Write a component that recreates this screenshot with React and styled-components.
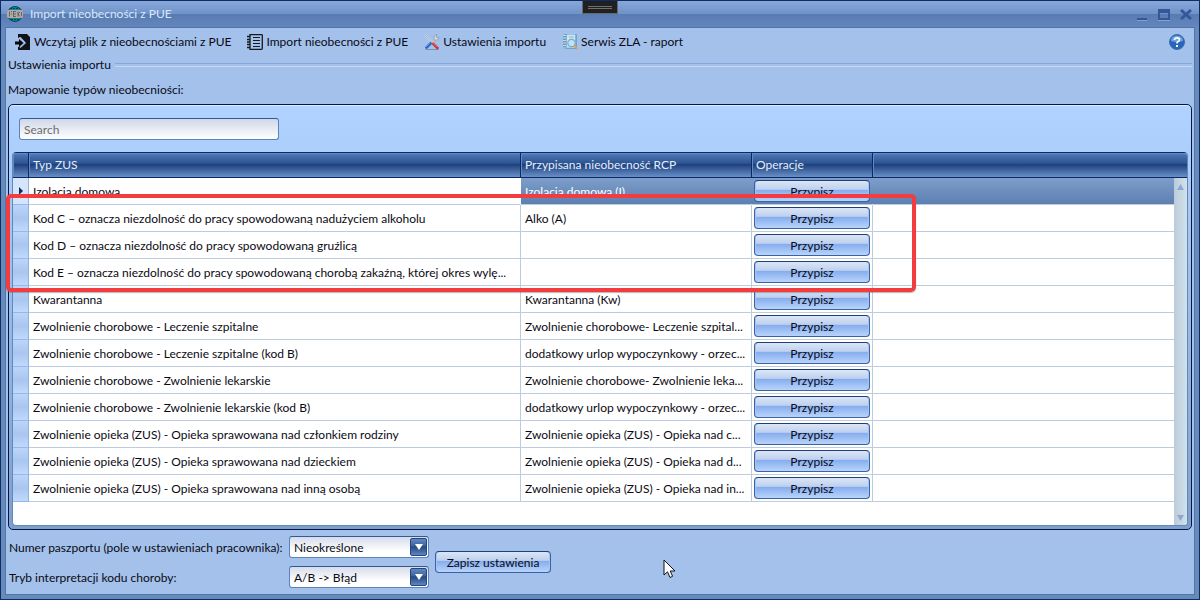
import React, { useState } from 'react';
import styled, { createGlobalStyle } from 'styled-components';

const GlobalStyle = createGlobalStyle`
	* {
		box-sizing: border-box;
	}
	body {
		margin: 0;
	}
	body, button, input, select {
		font-family: Lato, "Open Sans", sans-serif;
		font-size: 12px;
		line-height: 16px;
		color: #0a0a14;
	}
`;

const Window = styled.div`
	position: relative;
	display: flex;
	flex-direction: column;
	min-height: 100vh;
	padding: 0 4px 4px;
	border: 1px solid #0f2c66;
	background: #668aba;
	overflow: hidden;
`;

const TitleBar = styled.header`
	display: flex;
	align-items: center;
	height: 26px;
	margin: 0 -4px;
	padding: 0 5px 0 6px;
	background: linear-gradient(#88a8da, #6f92c8 50%, #587cb2 50%, #6387bc);
`;

const Title = styled.h1`
	flex: 1;
	margin: 0 0 0 7px;
	font-size: 12px;
	font-weight: 400;
	color: #d8e8fb;
`;

const WindowButton = styled.button`
	display: flex;
	padding: 0;
	margin-left: 6px;
	border: none;
	background: none;
	cursor: pointer;
`;

const Handle = styled.div`
	position: absolute;
	top: -1px;
	left: 581px;
	width: 36px;
	height: 14px;
	padding: 5px;
	border: 1px solid #686868;
	background: #202020;
`;

const HandleLines = styled.div`
	height: 3px;
	border: solid #707070;
	border-width: 1px 0;
`;

const Content = styled.main`
	flex: 1;
	display: flex;
	flex-direction: column;
	padding: 0 2px 6px;
	border: 1px solid #5075a8;
	background: #a3c1eb;
`;

const Toolbar = styled.nav`
	display: flex;
	align-items: center;
	gap: 16px;
	height: 28px;
	padding: 0 7px;
`;

const ToolButton = styled.button`
	display: flex;
	align-items: center;
	gap: 3px;
	padding: 0;
	border: none;
	background: none;
	white-space: nowrap;
	cursor: pointer;
`;

const HelpButton = styled(ToolButton)`
	margin-left: auto;
`;

const GroupTitle = styled.h2`
	display: flex;
	align-items: center;
	gap: 4px;
	margin: 0;
	height: 18px;
	font-size: 12px;
	font-weight: 400;

	&::after {
		content: "";
		flex: 1;
		height: 2px;
		border-top: 1px solid #84a7dc;
		border-bottom: 1px solid #c4d8f4;
	}
`;

const Caption = styled.p`
	margin: 0;
	padding: 8px 0 6px;
`;

const GridPanel = styled.section`
	flex: 1;
	display: flex;
	flex-direction: column;
	padding: 13px 3px 3px;
	border: 1px solid #04164a;
	border-radius: 5px;
	background: linear-gradient(#b1d3ff, #a8caf6 20%, #7f9fca);
	box-shadow: inset 0 1px #d9eaff;
`;

const SearchInput = styled.input`
	width: 260px;
	height: 22px;
	margin: 0 7px 12px;
	padding: 0 4px;
	border: 1px solid #5d82bd;
	border-top-color: #34588f;
	border-radius: 3px;
	background: linear-gradient(#cfd8e8, #fff);

	&::placeholder {
		color: #6d6d6d;
		opacity: 1;
	}
`;

const GridBody = styled.div`
	position: relative;
	flex: 1;
	border: 1px solid #5f87c0;
	border-top: none;
	border-radius: 4px;
	background: #fff;
	overflow: hidden;
`;

const Table = styled.table`
	width: 100%;
	table-layout: fixed;
	border-collapse: separate;
	border-spacing: 0;
`;

const HeadCell = styled.th`
	height: 26px;
	width: ${props => props.$width || 'auto'};
	padding: 0 4px;
	border: solid #0a2a63;
	border-width: 1px ${props => (props.$last ? '0' : '1px')} 1px 0;
	background: linear-gradient(#5b85c2, #4670ad 12%, #2c5391 44%, #1c3d79 46%, #6990c9);
	box-shadow: inset 1px 1px #6289c2;
	font-weight: 400;
	text-align: left;
	color: #e2effd;
`;

const Cell = styled.td`
	height: 27px;
	padding: 2px 4px 0;
	border-right: 1px solid #bccbe0;
	border-bottom: 1px solid #bccbe0;
	white-space: nowrap;
	overflow: hidden;
`;

const Row = styled.tr`
	${Cell} {
		${props => props.$selected && `
			border-right-color: transparent;
			background: linear-gradient(#7e9dca, #5d80b1);
			color: #fff;
		`}
	}
`;

const FocusedCell = styled(Cell)`
	&&& {
		background: #fff;
		color: #0a0a14;
	}
`;

const RowHeader = styled.th`
	height: 27px;
	padding: 0 0 0 5px;
	border-right: 1px solid #8db0e6;
	border-bottom: 1px solid #96b7e8;
	background: ${props => (props.$selected ? '#d6e5fa' : 'linear-gradient(#bcd5f9, #a9c6f0 50%, #c0d9fb)')};
	line-height: 8px;
	text-align: left;
`;

const ButtonCell = styled(Cell)`
	padding: 2px;
`;

const GlossButton = styled.button`
	display: block;
	width: 116px;
	height: 22px;
	padding: 1px 0 0;
	border: 1px solid #3b62a2;
	border-top-color: #203f78;
	border-radius: 4px;
	background: linear-gradient(#dbe6f6, #bed0ef 42%, #84acee 45%, #b9d4fb);
	box-shadow: inset 1px 0 #a5c5f5, inset -1px 0 #a5c5f5;
	cursor: pointer;
`;

const ScrollTrack = styled.div`
	position: absolute;
	top: 26px;
	right: 0;
	bottom: 0;
	display: flex;
	flex-direction: column;
	align-items: center;
	justify-content: space-between;
	width: 13px;
	padding: 6px 0 4px;
	background: linear-gradient(90deg, #bccbda, #d0e2ea);
`;

const Footer = styled.form`
	display: grid;
	grid-template-columns: minmax(281px, max-content) 140px max-content;
	align-items: center;
	justify-content: start;
	gap: 8px 0;
	margin-top: 6px;
`;

const FieldLabel = styled.label`
	padding: 1px 0 0 1px;
`;

const SelectBox = styled.div`
	display: flex;
	position: relative;
`;

const Select = styled.select`
	appearance: none;
	width: 100%;
	height: 22px;
	padding: 1px 20px 0 4px;
	border: 1px solid #5d82bd;
	border-top-color: #34588f;
	border-radius: 3px;
	background: linear-gradient(#d5dcea, #fff 70%);
`;

const SelectArrow = styled.span`
	position: absolute;
	top: 2px;
	right: 2px;
	display: flex;
	align-items: center;
	justify-content: center;
	width: 17px;
	height: 18px;
	border: 1px solid #25457c;
	border-radius: 2px;
	background: linear-gradient(#6288c0, #3a62a0 45%, #24477f 48%, #5f86bf);
	pointer-events: none;
`;

const SaveButton = styled(GlossButton)`
	grid-column: 3;
	grid-row: 1 / span 2;
	margin-left: 6px;
`;

const Highlight = styled.div`
	position: absolute;
	top: 193px;
	left: 5px;
	width: 910px;
	height: 98px;
	border: 4px solid #f23c3d;
	border-radius: 5px;
	box-shadow: 0 1px 1px #70707080;
	pointer-events: none;
`;

const Pointer = styled.svg`
	position: absolute;
	top: 558px;
	left: 662px;
	pointer-events: none;
`;

const Icon = ({ children }) => (
	<svg width="16" height="16" viewBox="0 0 16 16" fill="none" aria-hidden="true">{children}</svg>
);

const AppIcon = () => (
	<Icon>
		<circle cx="8" cy="8" r="7.5" fill="#078f90" stroke="#123d63" />
		<path d="M3 2.5h10M4 13.5h8" stroke="#063b52" strokeDasharray="2 1" />
		<path d="M1 4h14l1 1.5v5L15 12H1l-1-1.500v-5z" fill="#b3aaa8" />
		<path d="M2.500 5.500v5M4 5.500h1M4 8h1M6.500 5v6M7 5.500h2M7 8h2M7 10.500h2M11 5.500v5M11 8l2-2M11 8l2 2.500M14.500 6v4" stroke="#4a555a" strokeWidth=".800" />
	</Icon>
);

const LoadIcon = () => (
	<Icon>
		<path d="M3 0h9l3 3v13H3v-3l3-1 4-3.500L5 3 3 4z" fill="#10131a" />
		<path d="M5 3.500 10 9l-5 4.500" stroke="#a3c1eb" strokeWidth="1.500" />
		<path d="M0 7.500h4V5l4.500 4L4 13v-2.500H0z" fill="#05070b" />
	</Icon>
);

const NotebookIcon = () => (
	<Icon>
		<path d="M3 .700h11.500q.800 0 .800.800v13q0 .800-.800.800H3z" stroke="#17191d" strokeWidth="1.300" />
		<path d="M0 2.500h3M0 5.500h3M0 8h3M0 10.500h3M0 13.500h3" stroke="#17191d" strokeWidth="1.400" />
		<path d="M6 3.500h7M6 6.500h7M6 9.500h7M6 12.500h7" stroke="#17191d" />
	</Icon>
);

const ToolsIcon = () => (
	<Icon>
		<path d="M1.500 15.500h13" stroke="#7791b5" />
		<path d="M1 1l6 6.500" stroke="#e0e3e6" strokeWidth="1.800" />
		<path d="M1 1l6 6.500" stroke="#777f89" strokeWidth=".600" />
		<path d="M8 8.500l5.500 5.500" stroke="#c8373a" strokeWidth="2.600" strokeLinecap="round" />
		<path d="M8.500 8l5 5" stroke="#f3a09b" strokeWidth=".700" />
		<path d="M7 9l5-5" stroke="#bdc1c6" strokeWidth="2.200" />
		<path d="M10 3l1-2 2-.500-1 2 1 1.500 2-1-.500 2-2 1-2 .200z" fill="#d9dcdf" stroke="#858d96" strokeWidth=".600" />
		<path d="M6.500 9.500l-4 4" stroke="#2763c0" strokeWidth="2.600" strokeLinecap="round" />
		<path d="M6 9l-4 4" stroke="#70a4ef" strokeWidth=".800" />
	</Icon>
);

const ReportIcon = () => (
	<Icon>
		<path d="M3 .500h11.500v14H3z" fill="#80b7df" stroke="#6196bf" strokeWidth=".700" />
		<path d="M5 .500h8v13H5z" fill="#c9e4f5" />
		<path d="M1 .500h3v14.500H1z" fill="#6b9cbf" />
		<path d="M1 1.500h3M1 4h3M1 6.500h3M1 9h3M1 11.500h3M1 14h3" stroke="#d9ebf7" strokeWidth=".800" />
		<path d="M7 3h5" stroke="#8fb8d3" />
		<circle cx="9.500" cy="9" r="3.700" fill="#b9e5fa" stroke="#8ca3b5" strokeWidth="1.200" />
		<path d="M12.300 12l3 3" stroke="#e1a149" strokeWidth="1.800" />
	</Icon>
);

const HelpIcon = () => (
	<Icon>
		<circle cx="8" cy="8" r="7.500" fill="#2666bd" stroke="#426da8" />
		<path d="M2 7a6 5.500 0 0 1 12 0Q8 9 2 7z" fill="#6ba2df" />
		<path d="M5.500 6q0-2.200 2.500-2.200t2.500 1.900Q10.500 7 9 7.600q-1 .500-1 1.900" stroke="#fff" strokeWidth="1.700" />
		<path d="M7 11h2v2H7z" fill="#fff" />
	</Icon>
);

const Triangle = ({ up, width = 7, height = 6, fill = '#8fa6cf' }) => (
	<svg width={width} height={height} viewBox="0 0 8 6" preserveAspectRatio="none" aria-hidden="true">
		<path d={up ? 'M4 0l4 6H0z' : 'M0 0h8L4 6z'} fill={fill} />
	</svg>
);

const tools = [
	{ label: 'Wczytaj plik z nieobecnościami z PUE', icon: <LoadIcon /> },
	{ label: 'Import nieobecności z PUE', icon: <NotebookIcon /> },
	{ label: 'Ustawienia importu', icon: <ToolsIcon /> },
	{ label: 'Serwis ZLA - raport', icon: <ReportIcon /> },
];

const absences = [
	{ type: 'Izolacja domowa', assigned: 'Izolacja domowa (I)' },
	{ type: 'Kod C – oznacza niezdolność do pracy spowodowaną nadużyciem alkoholu', assigned: 'Alko (A)' },
	{ type: 'Kod D – oznacza niezdolność do pracy spowodowaną gruźlicą', assigned: '' },
	{ type: 'Kod E – oznacza niezdolność do pracy spowodowaną chorobą zakaźną, której okres wylę...', assigned: '' },
	{ type: 'Kwarantanna', assigned: 'Kwarantanna (Kw)' },
	{ type: 'Zwolnienie chorobowe - Leczenie szpitalne', assigned: 'Zwolnienie chorobowe- Leczenie szpital...' },
	{ type: 'Zwolnienie chorobowe - Leczenie szpitalne (kod B)', assigned: 'dodatkowy urlop wypoczynkowy - orzec...' },
	{ type: 'Zwolnienie chorobowe - Zwolnienie lekarskie', assigned: 'Zwolnienie chorobowe- Zwolnienie leka...' },
	{ type: 'Zwolnienie chorobowe - Zwolnienie lekarskie (kod B)', assigned: 'dodatkowy urlop wypoczynkowy - orzec...' },
	{ type: 'Zwolnienie opieka (ZUS) - Opieka sprawowana nad członkiem rodziny', assigned: 'Zwolnienie opieka (ZUS) - Opieka nad c...' },
	{ type: 'Zwolnienie opieka (ZUS) - Opieka sprawowana nad dzieckiem', assigned: 'Zwolnienie opieka (ZUS) - Opieka nad d...' },
	{ type: 'Zwolnienie opieka (ZUS) - Opieka sprawowana nad inną osobą', assigned: 'Zwolnienie opieka (ZUS) - Opieka nad in...' },
];

const AbsenceRow = ({ absence, selected, onSelect }) => {
	const TypeCell = selected ? FocusedCell : Cell;
	return (
		<Row $selected={selected} onClick={onSelect}>
			<RowHeader scope="row" $selected={selected}>
				{selected && (
					<svg width="5" height="8" viewBox="0 0 5 8" aria-hidden="true">
						<path d="M1 0l4 4-4 4z" fill="#102d63" />
					</svg>
				)}
			</RowHeader>
			<TypeCell>{absence.type}</TypeCell>
			<Cell>{absence.assigned}</Cell>
			<ButtonCell>
				<GlossButton type="button">Przypisz</GlossButton>
			</ButtonCell>
			<Cell />
		</Row>
	);
};

const SelectField = ({ id, label, options }) => (
	<>
		<FieldLabel htmlFor={id}>{label}</FieldLabel>
		<SelectBox>
			<Select id={id}>
				{options.map(option => <option key={option}>{option}</option>)}
			</Select>
			<SelectArrow>
				<Triangle width={8} height={6} fill="#fff" />
			</SelectArrow>
		</SelectBox>
	</>
);

const App = () => {
	const [selected, setSelected] = useState(0);
	const [search, setSearch] = useState('');
	const visible = absences.filter(a => a.type.toLowerCase().includes(search.toLowerCase()));

	return (
		<>
			<GlobalStyle />
			<Window>
				<TitleBar>
					<AppIcon />
					<Title>Import nieobecności z PUE</Title>
					<WindowButton aria-label="Minimalizuj">
						<Icon><path d="M3 12h10v2H3z" fill="#34579b" /><path d="M3 14.500h10" stroke="#83a1d0" /></Icon>
					</WindowButton>
					<WindowButton aria-label="Maksymalizuj">
						<Icon><path d="M2 3h12v11H2zM4 7v5h8V7z" fill="#34579b" fillRule="evenodd" /><path d="M2 14.500h12" stroke="#83a1d0" /></Icon>
					</WindowButton>
					<WindowButton aria-label="Zamknij">
						<Icon><path d="M3 4l10 9M13 4L3 13" stroke="#34579b" strokeWidth="3" /></Icon>
					</WindowButton>
				</TitleBar>
				<Content>
					<Toolbar>
						{tools.map(tool => (
							<ToolButton key={tool.label}>{tool.icon}{tool.label}</ToolButton>
						))}
						<HelpButton aria-label="Pomoc"><HelpIcon /></HelpButton>
					</Toolbar>
					<GroupTitle>Ustawienia importu</GroupTitle>
					<Caption>Mapowanie typów nieobecniości:</Caption>
					<GridPanel>
						<SearchInput
							type="text"
							aria-label="Search"
							placeholder="Search"
							value={search}
							onChange={e => setSearch(e.target.value)}
						/>
						<GridBody>
							<Table>
								<thead>
									<tr>
										<HeadCell $width="16px" />
										<HeadCell $width="492px">Typ ZUS</HeadCell>
										<HeadCell $width="231px">Przypisana nieobecność RCP</HeadCell>
										<HeadCell $width="121px">Operacje</HeadCell>
										<HeadCell $last />
									</tr>
								</thead>
								<tbody>
									{visible.map((absence, index) => (
										<AbsenceRow
											key={absence.type}
											absence={absence}
											selected={index === selected}
											onSelect={() => setSelected(index)}
										/>
									))}
								</tbody>
							</Table>
							<ScrollTrack>
								<Triangle up />
								<Triangle />
							</ScrollTrack>
						</GridBody>
					</GridPanel>
					<Footer>
						<SelectField
							id="passport"
							label="Numer paszportu (pole w ustawieniach pracownika):"
							options={['Nieokreślone']}
						/>
						<SelectField
							id="mode"
							label="Tryb interpretacji kodu choroby:"
							options={['A/B -> Błąd']}
						/>
						<SaveButton type="button">Zapisz ustawienia</SaveButton>
					</Footer>
				</Content>
				<Handle><HandleLines /></Handle>
				<Highlight />
				<Pointer width="13" height="20" viewBox="0 0 13 20" aria-hidden="true">
					<path d="M1 1v15l3.500-3.200L7 18.500l2.600-1.200L7.200 12H12z" fill="#fff" stroke="#111" strokeLinejoin="round" />
				</Pointer>
			</Window>
		</>
	);
};

export default App;
